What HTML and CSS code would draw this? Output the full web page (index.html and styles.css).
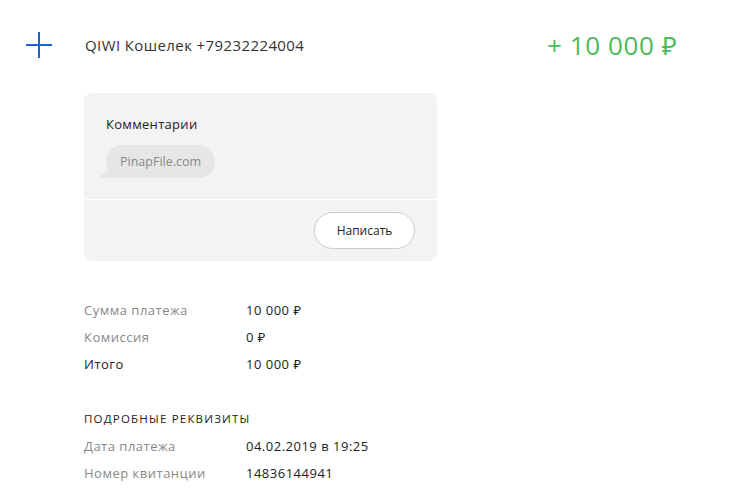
FILE: index.html
```html
<!DOCTYPE html>
<html lang="ru">
<head>
  <meta charset="UTF-8">
  <title>Платеж</title>
  <link rel="stylesheet" href="styles.css">
</head>
<body>

<div class="header">
  <svg class="icon" width="28" height="28" viewBox="0 0 28 28">
    <path d="M14 1 V27 M1 14 H27" stroke="#1d63c9" stroke-width="2" fill="none"/>
  </svg>
  <div class="title">QIWI Кошелек +79232224004</div>
  <div class="amount">+ 10 000 ₽</div>
</div>

<div class="card">
  <div class="card-top">
    <div class="card-label">Комментарии</div>
    <div class="bubble">PinapFile.com</div>
  </div>
  <div class="card-bottom">
    <button class="btn">Написать</button>
  </div>
</div>

<div class="rows">
  <div class="row"><span class="key">Сумма платежа</span><span class="val">10 000 ₽</span></div>
  <div class="row"><span class="key">Комиссия</span><span class="val">0 ₽</span></div>
  <div class="row total"><span class="key">Итого</span><span class="val">10 000 ₽</span></div>
</div>

<div class="section">Подробные реквизиты</div>
<div class="rows">
  <div class="row"><span class="key">Дата платежа</span><span class="val">04.02.2019 в 19:25</span></div>
  <div class="row"><span class="key">Номер квитанции</span><span class="val">14836144941</span></div>
</div>

</body>
</html>
```

FILE: styles.css
```css
body {
  margin: 0;
  padding: 0 0 0 25px;
  font-family: "Open Sans", "Noto Sans", sans-serif;
  color: #222;
  background: #fff;
}
.header {
  display: flex;
  align-items: center;
  height: 90px;
}
.icon {
  flex: none;
}
.title {
  margin-left: 32px;
  font-size: 15px;
  letter-spacing: 0.4px;
  color: #333;
  width: 462px;
}
.amount {
  font-size: 26px;
  letter-spacing: 0.6px;
  color: #4cbb5c;
  white-space: nowrap;
}
.card {
  margin: 3px 0 0 59px;
  width: 353px;
  background: #f3f3f3;
  border-radius: 8px;
}
.card-top {
  padding: 22px 22px 21px;
  border-bottom: 1px solid #fff;
}
.card-label {
  font-size: 13px;
  letter-spacing: 0.3px;
  color: #222;
}
.bubble {
  position: relative;
  display: inline-block;
  margin-top: 12px;
  padding: 0 14px;
  height: 33px;
  line-height: 33px;
  background: #e6e6e6;
  border-radius: 17px;
  font-size: 12.5px;
  color: #888;
}
.bubble::before {
  content: "";
  position: absolute;
  left: -8px;
  bottom: 0;
  width: 20px;
  height: 14px;
  background: #e6e6e6;
  clip-path: polygon(100% 0, 100% 100%, 0 100%, 40% 55%);
}
.card-bottom {
  display: flex;
  justify-content: flex-end;
  padding: 12px 22px;
}
.btn {
  width: 101px;
  height: 37px;
  background: #fff;
  border: 1px solid #ccc;
  border-radius: 19px;
  font-family: inherit;
  font-size: 12px;
  color: #222;
}
.rows {
  margin-left: 59px;
  margin-top: 35px;
}
.row {
  display: flex;
  height: 27px;
  align-items: center;
  font-size: 13px;
  letter-spacing: 0.5px;
}
.key {
  width: 162px;
  color: #888;
}
.val {
  color: #222;
}
.total .key {
  color: #222;
}
.section {
  margin: 34px 0 0 59px;
  font-size: 11.5px;
  letter-spacing: 1.2px;
  text-transform: uppercase;
  color: #222;
}
.section + .rows {
  margin-top: 6px;
}
```
